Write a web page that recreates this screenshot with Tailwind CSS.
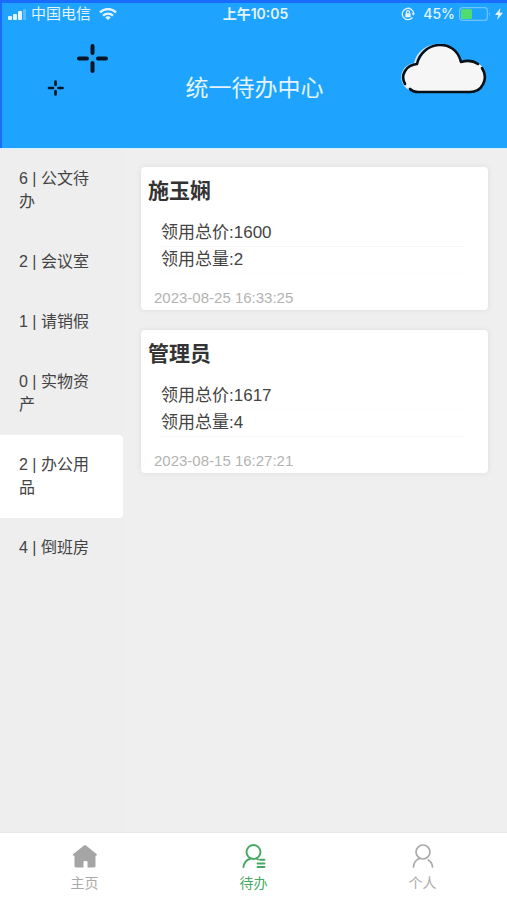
<!DOCTYPE html>
<html lang="zh-CN">
<head>
<meta charset="utf-8">
<meta name="viewport" content="width=device-width, initial-scale=1">
<title>统一待办中心</title>
<script src="https://cdn.jsdelivr.net/npm/@tailwindcss/browser@4"></script>
</head>
<body class="flex h-screen flex-col bg-[#efeff0] font-['Liberation_Sans','Noto_Sans_CJK_SC',sans-serif] text-[#444]">
<header class="shrink-0 border-t-3 border-l-2 border-[#1a6cff] bg-[#1ea4ff] text-white">
  <div class="grid h-[22px] grid-cols-3 items-center pr-1 pl-1.5 font-[Inter,'Noto_Sans_CJK_SC',sans-serif] text-[#e3f4ff]">
    <div class="flex items-center gap-1">
      <svg class="h-3 w-[19px]" viewBox="0 0 19 12" fill="currentColor" aria-hidden="true"><rect y="8" width="4" height="4" rx="1"/><rect x="5" y="6" width="4" height="6" rx="1"/><rect x="10" y="3" width="4" height="9" rx="1"/><rect x="15" y="1" width="3" height="11" rx="1" opacity=".3"/></svg>
      <span class="text-[15px] leading-5 whitespace-nowrap">中国电信</span>
      <svg class="ml-1 h-3 w-[18px]" viewBox="0 0 18 12" fill="none" stroke="currentColor" stroke-width="2.4" aria-hidden="true"><path d="M1 4.300C5.500 0 12.500 0 17 4.300M4 7.700c3-2.700 7-2.700 10 0"/><path d="M9 12 6.200 9.400c1.600-1.400 4-1.400 5.600 0z" fill="currentColor" stroke="none"/></svg>
    </div>
    <div class="text-center text-sm leading-5 font-semibold whitespace-nowrap">上午10:05</div>
    <div class="flex items-center justify-end">
      <svg class="mr-2 size-3.5" viewBox="0 0 14 14" fill="none" stroke="currentColor" stroke-width="1.300" aria-hidden="true"><path d="M11.500 10.500A5.700 5.700 0 1 1 12.700 7"/><path d="M10.600 6.200h3.400L12.300 8.800z" fill="currentColor" stroke="none"/><rect x="4.300" y="6.300" width="5.400" height="3.900" rx=".6" fill="currentColor" stroke="none"/><path d="M5.500 6.500V5.200a1.500 1.500 0 0 1 3 0v1.300"/></svg>
      <span class="mr-1 text-sm leading-5 font-medium">45%</span>
      <svg class="h-3.5 w-8" viewBox="0 0 32 14" aria-hidden="true"><rect x=".6" y=".6" width="27.800" height="12.800" rx="3" fill="none" stroke="#6fc4ff" stroke-width="1.200"/><rect x="2" y="2" width="11" height="10" rx="1.500" fill="#4fdc70"/><path d="M30 5q2 2 0 4z" fill="#6fc4ff"/></svg>
      <svg class="ml-1 h-3 w-2" viewBox="0 0 8 12" fill="currentColor" aria-hidden="true"><path d="M5.500 0 0 7h3.300L2 12l6-7.200H4.500z"/></svg>
    </div>
  </div>
  <div class="grid h-[123px] grid-cols-[1fr_auto_1fr]">
    <svg class="mt-4 ml-[42px] h-14 w-[66px]" viewBox="0 0 66 56" fill="none" stroke="#071426" stroke-linecap="round" aria-hidden="true"><path stroke-width="4" d="M48.500 5v7M48.500 22v8M35 17.500h8M54 17.500h8"/><path stroke-width="2.700" d="M11.500 40.500v3.500M11.500 50v3.500M5 47h4M14.500 47h4"/></svg>
    <h1 class="mt-[47px] text-[23px] leading-8 text-[#e3f4ff]">统一待办中心</h1>
    <svg class="mt-[19px] mr-[19px] h-[52px] w-[88px] justify-self-end" viewBox="0 0 88 52" fill="none" aria-hidden="true"><path d="M15 48C-1 47-3 23 15 20 20-3 55-7 61 19c17-4 26 5 25 15-1 8-7 14-15 14z" transform="translate(-1 -1)" fill="#d7e5ef"/><path d="M17 48C1 47 0 23 17 20 22-3 55-7 61 18c16-4 25 5 24 15-1 9-7 15-15 15z" fill="#f6f6f6"/><path d="M5 40C0 31 6 21 17 20 22-3 55-7 61 18q10-3 17 2M82 24c7 11 0 24-12 24H18q-5 0-8-3" stroke="#071018" stroke-width="2.600" stroke-linecap="round" stroke-linejoin="round"/></svg>
  </div>
</header>
<div class="flex min-h-0 flex-1 border-t border-[#d9f1fc]">
  <nav aria-label="待办分类" class="flex w-[123px] shrink-0 flex-col bg-[#eeeeef] text-base leading-[23px] *:px-[19px] *:pt-[18px] *:pb-[19px] *:text-left">
    <button type="button">6 | 公文待办</button>
    <button type="button">2 | 会议室</button>
    <button type="button">1 | 请销假</button>
    <button type="button">0 | 实物资产</button>
    <button type="button" aria-current="true" class="rounded-r bg-white">2 | 办公用品</button>
    <button type="button">4 | 倒班房</button>
  </nav>
  <main class="flex min-w-0 flex-1 flex-col gap-5 overflow-auto pt-[18px] pr-[19px] pl-[18px]">
    <article class="rounded bg-white px-[7px] pt-[10px] shadow-[0_0_4px_1px_#e2e2e5]">
      <h2 class="text-[21px] leading-7 font-bold text-[#333]">施玉娴</h2>
      <div class="mr-4 ml-[13px] mt-[15px] text-[17px] leading-[26px]">
        <p class="border-b border-[#f7f7f8]">领用总价:1600</p>
        <p class="border-b border-[#fcfcfc]">领用总量:2</p>
      </div>
      <time datetime="2023-08-25T16:33:25" class="mt-3 ml-1.5 block text-[15px] leading-6 text-[#b3b3b3]">2023-08-25 16:33:25</time>
    </article>
    <article class="rounded bg-white px-[7px] pt-[10px] shadow-[0_0_4px_1px_#e2e2e5]">
      <h2 class="text-[21px] leading-7 font-bold text-[#333]">管理员</h2>
      <div class="mr-4 ml-[13px] mt-[15px] text-[17px] leading-[26px]">
        <p class="border-b border-[#fcfcfc]">领用总价:1617</p>
        <p class="border-b border-[#f7f7f8]">领用总量:4</p>
      </div>
      <time datetime="2023-08-15T16:27:21" class="mt-3 ml-1.5 block text-[15px] leading-6 text-[#b3b3b3]">2023-08-15 16:27:21</time>
    </article>
  </main>
</div>
<nav aria-label="主导航" class="grid h-[68px] shrink-0 grid-cols-3 border-t border-[#e8e8e8] bg-white text-sm leading-5 text-[#aaa]">
  <a href="#home" class="flex flex-col items-center gap-[5px] pt-[11px]">
    <svg class="h-6 w-[26px]" viewBox="0 0 26 24" fill="#a5a5a5" aria-hidden="true"><path d="M12 1.500q1-.8 2 0L24.500 10q1.200 1.500-.8 1.700H23.500V22q0 1.500-1.500 1.500h-6.500V18q0-1-1-1h-2q-1 0-1 1v5.500H4Q2.500 23.500 2.500 22V11.700q-3 0-1.200-1.700z"/></svg>
    <span>主页</span>
  </a>
  <a href="#todo" aria-current="page" class="flex flex-col items-center gap-[5px] pt-[11px] text-[#45a963]">
    <svg class="h-6 w-[26px]" viewBox="0 0 26 24" fill="none" stroke="currentColor" stroke-width="1.900" stroke-linecap="round" aria-hidden="true"><circle cx="12.500" cy="8" r="7"/><path d="M9.500 14.500Q3 17 2.500 23M15.500 14.500l1.500 1M19 15.800h4.500M16.500 19.500h7M16.500 23h7"/></svg>
    <span>待办</span>
  </a>
  <a href="#me" class="flex flex-col items-center gap-[5px] pt-[11px]">
    <svg class="h-6 w-[26px]" viewBox="0 0 26 24" fill="none" stroke="currentColor" stroke-width="1.700" stroke-linecap="round" aria-hidden="true"><circle cx="13" cy="8" r="7"/><path d="M9.500 14.500Q3.500 17 3.500 23M18.300 16q4 2.500 4.200 7"/></svg>
    <span>个人</span>
  </a>
</nav>
</body>
</html>
